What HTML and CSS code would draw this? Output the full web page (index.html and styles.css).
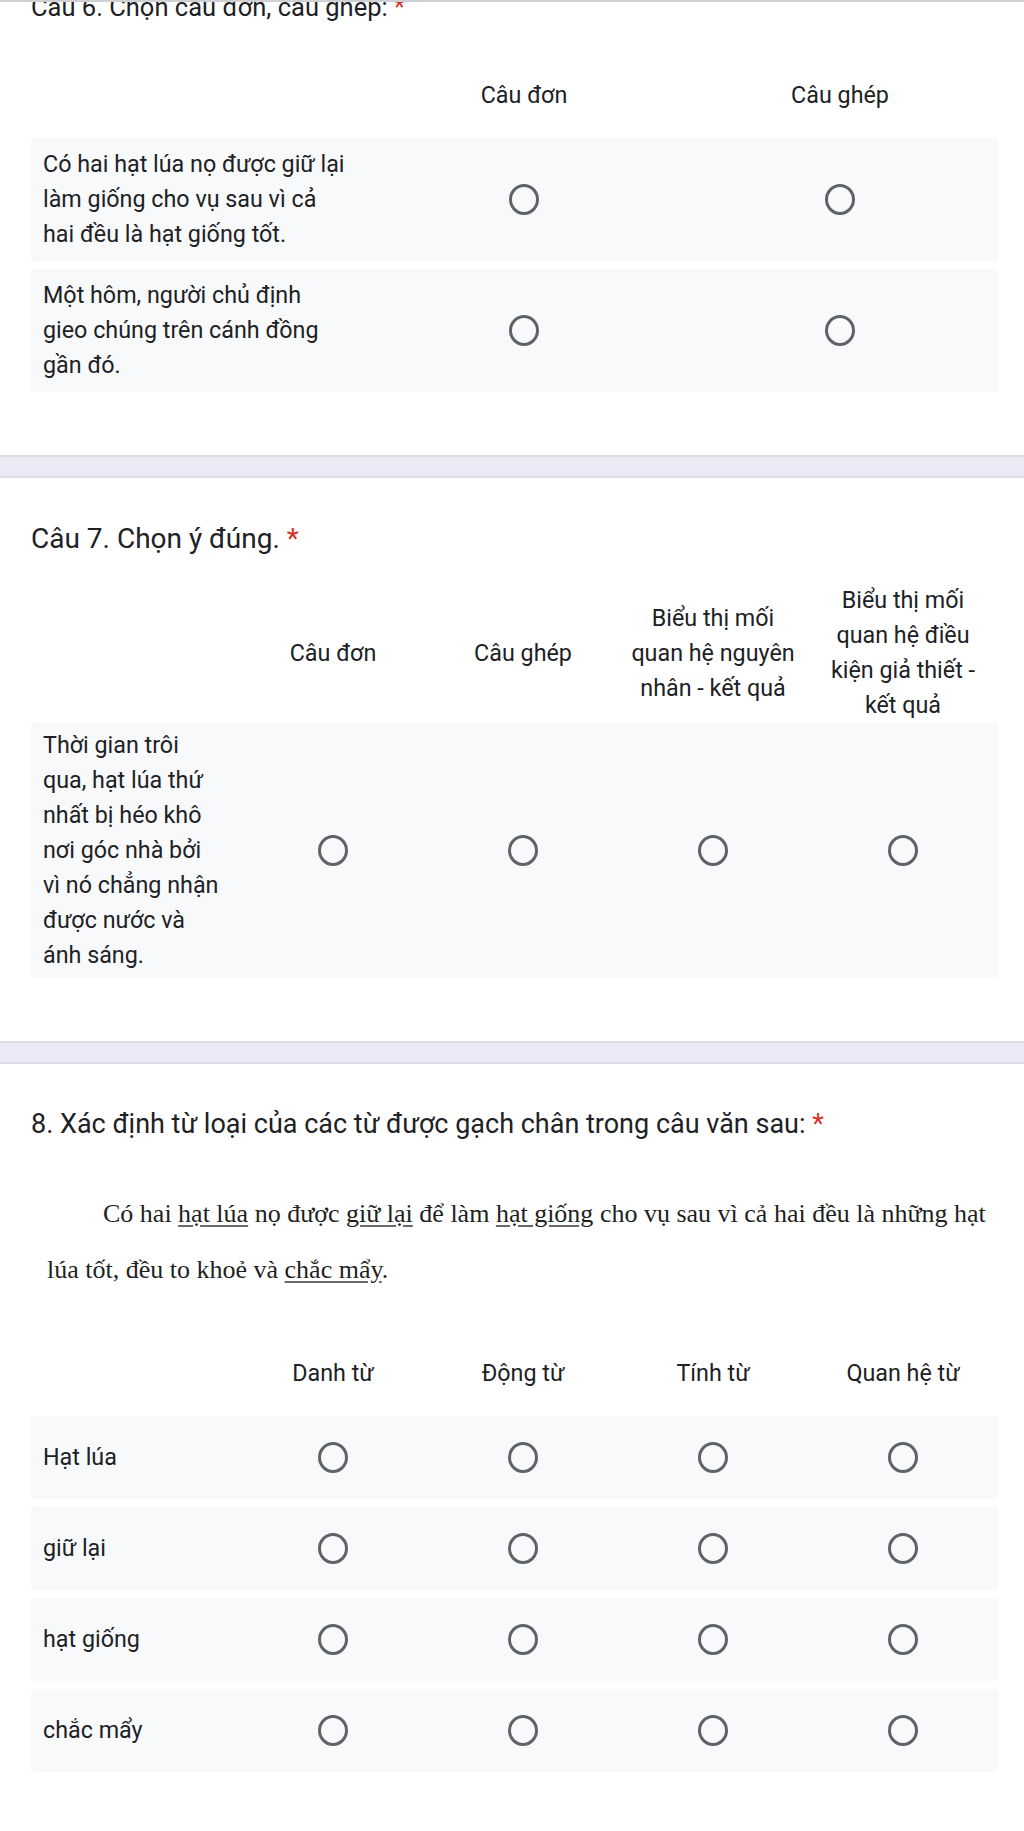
FILE: index.html
```html
<!DOCTYPE html>
<html lang="vi">
<head>
<meta charset="utf-8">
<title>Câu hỏi</title>
<link rel="stylesheet" href="styles.css">
</head>
<body>
<div class="topline"></div>
<div class="page">
  <section class="q">
    <h2 class="qtitle first">Câu 6. Chọn câu đơn, câu ghép: <span class="req">*</span></h2>
    <div class="grid g2">
      <div class="row hdr">
        <div class="lbl"></div>
        <div class="col">Câu đơn</div>
        <div class="col">Câu ghép</div>
      </div>
      <div class="row card">
        <div class="lbl">Có hai hạt lúa nọ được giữ lại<br>làm giống cho vụ sau vì cả<br>hai đều là hạt giống tốt.</div>
        <div class="col"><span class="radio"></span></div>
        <div class="col"><span class="radio"></span></div>
      </div>
      <div class="row card">
        <div class="lbl">Một hôm, người chủ định<br>gieo chúng trên cánh đồng<br>gần đó.</div>
        <div class="col"><span class="radio"></span></div>
        <div class="col"><span class="radio"></span></div>
      </div>
    </div>
  </section>

  <div class="band"></div>

  <section class="q">
    <h2 class="qtitle short">Câu 7. Chọn ý đúng. <span class="req">*</span></h2>
    <div class="grid g4">
      <div class="row hdr">
        <div class="lbl"></div>
        <div class="col">Câu đơn</div>
        <div class="col">Câu ghép</div>
        <div class="col">Biểu thị mối<br>quan hệ nguyên<br>nhân - kết quả</div>
        <div class="col">Biểu thị mối<br>quan hệ điều<br>kiện giả thiết -<br>kết quả</div>
      </div>
      <div class="row card">
        <div class="lbl">Thời gian trôi<br>qua, hạt lúa thứ<br>nhất bị héo khô<br>nơi góc nhà bởi<br>vì nó chẳng nhận<br>được nước và<br>ánh sáng.</div>
        <div class="col"><span class="radio"></span></div>
        <div class="col"><span class="radio"></span></div>
        <div class="col"><span class="radio"></span></div>
        <div class="col"><span class="radio"></span></div>
      </div>
    </div>
  </section>

  <div class="band"></div>

  <section class="q">
    <h2 class="qtitle">8. Xác định từ loại của các từ được gạch chân trong câu văn sau: <span class="req">*</span></h2>
    <p class="passage">Có hai <u>hạt lúa</u> nọ được <u>giữ lại</u> để làm <u>hạt giống</u> cho vụ sau vì cả hai đều là những hạt<br>lúa tốt, đều to khoẻ và <u>chắc mẩy</u>.</p>
    <div class="grid g4 after-passage">
      <div class="row hdr">
        <div class="lbl"></div>
        <div class="col">Danh từ</div>
        <div class="col">Động từ</div>
        <div class="col">Tính từ</div>
        <div class="col">Quan hệ từ</div>
      </div>
      <div class="row card">
        <div class="lbl">Hạt lúa</div>
        <div class="col"><span class="radio"></span></div>
        <div class="col"><span class="radio"></span></div>
        <div class="col"><span class="radio"></span></div>
        <div class="col"><span class="radio"></span></div>
      </div>
      <div class="row card">
        <div class="lbl">giữ lại</div>
        <div class="col"><span class="radio"></span></div>
        <div class="col"><span class="radio"></span></div>
        <div class="col"><span class="radio"></span></div>
        <div class="col"><span class="radio"></span></div>
      </div>
      <div class="row card">
        <div class="lbl">hạt giống</div>
        <div class="col"><span class="radio"></span></div>
        <div class="col"><span class="radio"></span></div>
        <div class="col"><span class="radio"></span></div>
        <div class="col"><span class="radio"></span></div>
      </div>
      <div class="row card">
        <div class="lbl">chắc mẩy</div>
        <div class="col"><span class="radio"></span></div>
        <div class="col"><span class="radio"></span></div>
        <div class="col"><span class="radio"></span></div>
        <div class="col"><span class="radio"></span></div>
      </div>
    </div>
  </section>
</div>
</body>
</html>
```
FILE: styles.css
```css
html, body {
  margin: 0;
  padding: 0;
  background: #ffffff;
}
body {
  font-family: Roboto, "Noto Sans", Arial, sans-serif;
  color: #202124;
  font-size: 23.3px;
  line-height: 35px;
}
.topline {
  position: absolute;
  top: 0;
  left: 0;
  right: 0;
  height: 2px;
  background: #cfd0d4;
}
.page {
  display: flow-root;
  padding: 0 26px 0 31px;
}
.qtitle {
  margin: 0;
  font-size: 27px;
  line-height: 33px;
  font-weight: 400;
  color: #202124;
}
.qtitle.first {
  margin-top: -9px;
  font-size: 25.5px;
}
.qtitle.short {
  font-size: 28px;
}
.req {
  color: #d93025;
}
.grid {
  margin-top: 28px;
  display: flex;
  flex-direction: column;
  gap: 8px;
}
.grid.after-passage {
  margin-top: 32px;
}
.row {
  display: grid;
  align-items: center;
}
.g2 .row {
  grid-template-columns: 335px 316px 316px;
}
.g4 .row {
  grid-template-columns: 207px repeat(4, 190px);
}
.hdr {
  min-height: 86px;
  margin-bottom: -8px;
}
.col {
  display: flex;
  justify-content: center;
  align-items: center;
  text-align: center;
}
.card {
  background: #f8f9fa;
  border-radius: 3px;
  padding: 5px 0;
  min-height: 83px;
  box-sizing: border-box;
}
.g2 .card {
  padding: 9px 0;
}
.lbl {
  padding-left: 12px;
}
.radio {
  display: block;
  width: 30px;
  height: 31px;
  border: 3px solid #5f6368;
  border-radius: 50%;
  box-sizing: border-box;
}
.band {
  height: 19px;
  background: #ece9f6;
  border-top: 2px solid #dddde3;
  border-bottom: 2px solid #dddde3;
  margin: 63px -26px 44px -31px;
}
.passage {
  margin: 45px 0 0 16px;
  font-family: "Liberation Serif", "Times New Roman", serif;
  font-size: 26px;
  line-height: 56px;
  text-indent: 56px;
  color: #1f1f1f;
  white-space: nowrap;
}
.passage u {
  text-decoration-color: #6a6a6a;
  text-underline-offset: 3px;
}
```
